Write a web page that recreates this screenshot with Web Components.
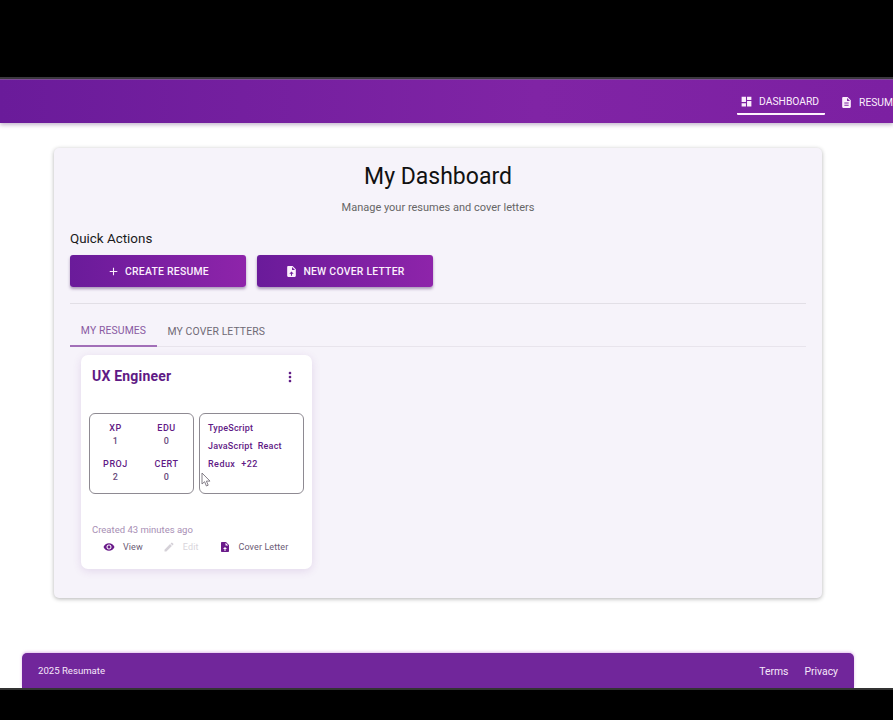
<!DOCTYPE html>
<html><head><meta charset="utf-8"><style>
html,body{margin:0;padding:0;background:#000;font-family:Roboto,"Liberation Sans",sans-serif;overflow:hidden}
</style></head><body>
<rs-app></rs-app>
<script>
const I={
dash:'<path d="M3 13h8V3H3v10zm0 8h8v-6H3v6zm10 0h8V11h-8v10zm0-18v6h8V3h-8z"/>',
doc:'<path d="M14 2H6c-1.1 0-2 .9-2 2v16c0 1.1.9 2 2 2h12c1.1 0 2-.9 2-2V8l-6-6zm2 16H8v-2h8v2zm0-4H8v-2h8v2zm-3-5V3.5L18.5 9H13z"/>',
plus:'<path d="M19 13h-6v6h-2v-6H5v-2h6V5h2v6h6v2z"/>',
upload:'<path d="M14 2H6c-1.1 0-2 .9-2 2v16c0 1.1.9 2 2 2h12c1.1 0 2-.9 2-2V8l-6-6zm-1 7V3.5L18.5 9H13zm-1 3 4 4h-3v4h-2v-4H8l4-4z"/>',
more:'<path d="M12 8c1.1 0 2-.9 2-2s-.9-2-2-2-2 .9-2 2 .9 2 2 2zm0 2c-1.1 0-2 .9-2 2s.9 2 2 2 2-.9 2-2-.9-2-2-2zm0 6c-1.1 0-2 .9-2 2s.9 2 2 2 2-.9 2-2-.9-2-2-2z"/>',
eye:'<path d="M12 4.5C7 4.5 2.73 7.61 1 12c1.73 4.39 6 7.5 11 7.5s9.27-3.11 11-7.5c-1.73-4.39-6-7.5-11-7.5zM12 17c-2.76 0-5-2.24-5-5s2.24-5 5-5 5 2.24 5 5-2.24 5-5 5zm0-8c-1.66 0-3 1.34-3 3s1.34 3 3 3 3-1.34 3-3-1.34-3-3-3z"/>',
edit:'<path d="M3 17.25V21h3.75L17.81 9.94l-3.75-3.75L3 17.25zM20.71 7.04a1 1 0 0 0 0-1.41l-2.34-2.34a1 1 0 0 0-1.41 0l-1.83 1.83 3.75 3.75 1.83-1.83z"/>'};
function def(name,css,html){
  customElements.define(name,class extends HTMLElement{
    connectedCallback(){ if(this.shadowRoot)return;
      const r=this.attachShadow({mode:'open'});
      r.innerHTML='<style>'+css+'</style>'+(typeof html==='function'?html(this):html);
    }});
}
def('rs-icon',':host{display:inline-flex;flex:none}svg{display:block;width:100%;height:100%;fill:currentColor}',
  h=>`<svg viewBox="0 0 24 24">${I[h.getAttribute('name')]}</svg>`);
def('rs-nav-item',`:host{display:flex;align-items:center;gap:6px;height:26px;padding:0 0 0 3px;margin-top:1px;box-sizing:border-box;font-size:10.3px;font-weight:400;color:#fbeefc;white-space:nowrap;border-radius:1px;flex:none}
 :host([active]){width:88px;border-bottom:2px solid #fdf3fd}
 rs-icon{width:13px;height:13px}`,
 h=>`<rs-icon name="${h.getAttribute('icon')}"></rs-icon><slot></slot>`);
def('rs-header',`:host{display:flex;justify-content:flex-end;align-items:center;height:43px;overflow:hidden;
 background:linear-gradient(90deg,#6a1b9a 0%,#8024a5 60%,#7c20a2 100%);box-shadow:0 2px 4px rgba(60,20,90,.3);position:relative;border-top:1px solid #7d4a97}
 .wrap{display:flex;gap:12px;align-items:center;margin-right:-12px}`,
 `<div class="wrap"><slot></slot></div>`);
def('rs-button',`:host{display:flex;align-items:center;justify-content:center;gap:5px;width:176px;height:32px;box-sizing:border-box;border-radius:3px;
 background:linear-gradient(90deg,#6a1b9a,#8e24aa);color:#fbf0fc;font-size:10.4px;font-weight:500;letter-spacing:.25px;box-shadow:0 2px 3px rgba(60,20,90,.4);white-space:nowrap}
 rs-icon{width:13px;height:13px}`,
 h=>`<rs-icon name="${h.getAttribute('icon')}"></rs-icon><slot></slot>`);
def('rs-tabs',`:host{display:flex;height:32px;box-sizing:border-box;border-bottom:1px solid #e8e4ec;font-size:10.4px}
 div{display:flex;align-items:center;justify-content:center;height:32px;box-sizing:border-box;color:#6f6a75;padding:0 10.5px;letter-spacing:.12px}
 .a{color:#8a5aa2;border-bottom:2px solid #a26fb8;width:87px;padding:0}`,
 `<div class="a">MY RESUMES</div><div>MY COVER LETTERS</div>`);
def('rs-stat',`:host{display:flex;flex-direction:column;align-items:center;font-size:9px;font-weight:500;color:#5f1a85;letter-spacing:.55px}
 b{font-weight:500;line-height:14px}span{line-height:13px;color:#6a4a7c}`,
 h=>`<b>${h.getAttribute('k')}</b><span>${h.getAttribute('v')}</span>`);
def('rs-box',`:host{display:block;box-sizing:border-box;width:104.5px;height:81px;border:1px solid #8e8a92;border-radius:6px;background:#fff}`,`<slot></slot>`);
def('rs-action',`:host{display:flex;align-items:center;gap:8px;font-size:9px;letter-spacing:.1px;color:#6b5a75;white-space:nowrap}
 :host([disabled]){color:#d9d5dc}
 rs-icon{width:12px;height:12px;color:#6a1b8a}
 :host([disabled]) rs-icon{color:#d5d1d8}`,
 h=>`<rs-icon name="${h.getAttribute('icon')}"></rs-icon><slot></slot>`);
def('rs-resume-card',`:host{display:flex;flex-direction:column;box-sizing:border-box;width:231px;height:214px;margin-left:11px;margin-top:8px;background:#fff;border-radius:7px;
 box-shadow:0 2px 8px rgba(110,50,150,.14);position:relative;padding:0 8px}
 .top{display:flex;justify-content:space-between;align-items:center;height:42px;padding:0 0 0 3px}
 h3{margin:0;font-size:14px;font-weight:700;color:#5f1a85;letter-spacing:.2px}
 rs-icon{width:16px;height:16px;color:#5f1a85;margin-right:6px;margin-top:2px}
 .boxes{display:flex;gap:5.5px;margin-top:16px}
 .g{display:grid;grid-template-columns:51px 51px;row-gap:9px;padding-top:7px}
 .t{padding:4.5px 0 0 8px;font-size:9px;font-weight:500;color:#5f1a85;line-height:18px;letter-spacing:.2px}
 .t span{margin-right:5px}
 .t .w{letter-spacing:.45px;margin-right:6px}
 .c{font-size:9.5px;color:#a88fb5;margin:30px 0 0 3px;line-height:12px}
 .ac{display:flex;margin-top:2px;height:18px;padding-left:14px}
 .ac rs-action:nth-child(2){margin-left:20px}.ac rs-action:nth-child(3){margin-left:20px}
 .cur{position:absolute;left:120px;top:117px;width:10px;height:15px}`,
 `<div class="top"><h3>UX Engineer</h3><rs-icon name="more"></rs-icon></div>
 <div class="boxes"><rs-box><div class="g"><rs-stat k="XP" v="1"></rs-stat><rs-stat k="EDU" v="0"></rs-stat><rs-stat k="PROJ" v="2"></rs-stat><rs-stat k="CERT" v="0"></rs-stat></div></rs-box>
 <rs-box><div class="t"><span>TypeScript</span><br><span>JavaScript</span><span>React</span><br><span class="w">Redux</span><span class="w">+22</span></div></rs-box></div>
 <div class="c">Created 43 minutes ago</div>
 <div class="ac"><rs-action icon="eye">View</rs-action><rs-action icon="edit" disabled>Edit</rs-action><rs-action icon="upload">Cover Letter</rs-action></div>
 <svg class="cur" viewBox="0 0 10 15"><path d="M1 1v11l2.6-2.3L5.4 14l1.8-.8-1.8-4.1H9z" fill="#fff" stroke="#77727c" stroke-width=".9"/></svg>`);
def('rs-card',`:host{display:block;box-sizing:border-box;width:768px;height:450px;margin:25px 0 0 54px;background:#f6f3fa;border-radius:5px;box-shadow:0 1px 4px rgba(0,0,0,.3);padding:0 16px}
 h1{margin:0;padding-top:14px;height:46px;line-height:30px;font-size:23px;font-weight:400;text-align:center;color:#111}
 p{margin:0;text-align:center;font-size:11px;line-height:14px;color:#666;height:14px;margin-top:-7px}
 h2{margin:14px 0 0;font-size:13.4px;font-weight:400;line-height:20px;color:#1a1a1a}
 .b{display:flex;gap:11px;margin-top:6px}
 hr{border:0;border-top:1px solid #e2dfe6;margin:16px 0 11px}`,
 `<h1>My Dashboard</h1><p>Manage your resumes and cover letters</p><h2>Quick Actions</h2>
 <div class="b"><rs-button icon="plus">CREATE RESUME</rs-button><rs-button icon="upload">NEW COVER LETTER</rs-button></div><hr>
 <rs-tabs></rs-tabs><rs-resume-card></rs-resume-card>`);
def('rs-footer',`:host{display:flex;justify-content:space-between;align-items:center;box-sizing:border-box;width:832px;height:35px;margin:55px 0 0 22px;padding:0 16px;background:#71269b;
 border-radius:5px 5px 0 0;box-shadow:0 -1px 3px rgba(170,60,200,.35);color:#f6e6fa;font-size:9.6px}
 nav{display:flex;gap:16px;font-size:10.4px;padding-top:1px}`,
 `<span>2025 Resumate</span><nav><span>Terms</span><span>Privacy</span></nav>`);
def('rs-app',`:host{display:flex;flex-direction:column;width:893px;height:720px;background:#000;overflow:hidden}
 .bl{height:77px;flex:none;border-bottom:2px solid #3c3a3e}
 main{height:565px;background:#fff;overflow:hidden;display:block;flex:none}
 .bot{flex:1;border-top:2px solid #333}`,
 `<div class="bl"></div><rs-header><rs-nav-item icon="dash" active>DASHBOARD</rs-nav-item><rs-nav-item icon="doc">RESUMES</rs-nav-item></rs-header>
 <main><rs-card></rs-card><rs-footer></rs-footer></main><div class="bot"></div>`);
</script></body></html>
